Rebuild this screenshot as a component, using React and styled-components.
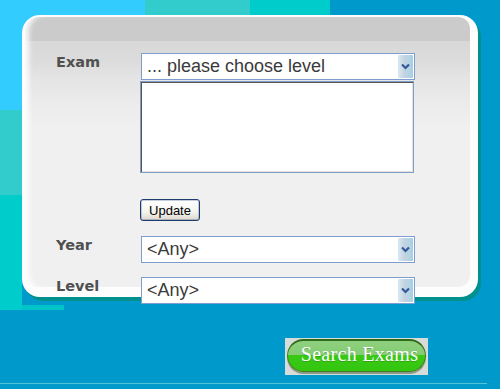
import React from "react";
import styled, { createGlobalStyle } from "styled-components";

const GlobalStyle = createGlobalStyle`
  html, body {
    margin: 0;
    padding: 0;
    overflow: hidden;
  }
`;

function Chevron() {
  return (
    <svg width="9" height="7" viewBox="0 0 9 7">
      <path d="M1 1.5 L4.5 5 L8 1.5" fill="none" stroke="#34589a" strokeWidth="2.2" />
    </svg>
  );
}

function Dropdown({ value }) {
  return (
    <SelectBox>
      <SelectValue>{value}</SelectValue>
      <ArrowButton>
        <Chevron />
      </ArrowButton>
    </SelectBox>
  );
}

export default function App() {
  return (
    <Page>
      <GlobalStyle />
      <Panel>
        <PanelInner>
          <FormGrid>
            <Label>Exam</Label>
            <FieldStack>
              <Dropdown value="... please choose level" />
              <ListBox />
              <UpdateButton type="button">Update</UpdateButton>
            </FieldStack>

            <Label>Year</Label>
            <Dropdown value="<Any>" />

            <Label>Level</Label>
            <Dropdown value="<Any>" />
          </FormGrid>
        </PanelInner>
      </Panel>

      <ButtonRow>
        <SearchFrame>
          <SearchPill type="button">Search Exams</SearchPill>
        </SearchFrame>
      </ButtonRow>

      <Divider />
    </Page>
  );
}

const Page = styled.div`
  width: 500px;
  height: 389px;
  overflow: hidden;
  display: flex;
  flex-direction: column;
  background-color: #0099cc;
  background-image:
    linear-gradient(#33ccff, #33ccff),
    linear-gradient(#33cccc, #33cccc),
    linear-gradient(#00cccc, #00cccc),
    linear-gradient(#33cccc, #33cccc),
    linear-gradient(#00cccc, #00cccc),
    linear-gradient(#00c4c8, #00c4c8);
  background-repeat: no-repeat;
  background-position:
    0 0,
    145px 0,
    250px 0,
    0 110px,
    0 195px,
    0 305px;
  background-size:
    145px 110px,
    105px 20px,
    80px 20px,
    22px 85px,
    22px 115px,
    64px 5px;
`;

const Panel = styled.div`
  margin: 15px 0 0 22px;
  width: 456px;
  height: 282px;
  flex-shrink: 0;
  box-sizing: border-box;
  border-radius: 18px;
  background: #fdfdfd;
  box-shadow: 3px 4px 0 #00908e;
  padding: 2px 8px 10px 3px;
`;

const PanelInner = styled.div`
  height: 100%;
  box-sizing: border-box;
  border-radius: 15px 12px 12px 14px;
  padding: 36px 0 0 31px;
  background: linear-gradient(
    to bottom,
    #cbcbcb 0,
    #cbcbcb 24px,
    #d8d8d8 24px,
    #dcdcdc 45px,
    #e4e4e4 60px,
    #ebebeb 85px,
    #f0f0f0 112px,
    #f0f0f0 100%
  );
  box-shadow: inset 7px 0 5px -3px rgba(255, 255, 255, 0.85);
`;

const FormGrid = styled.div`
  display: grid;
  grid-template-columns: 85px 274px;
  align-items: start;
  row-gap: 14px;
`;

const Label = styled.div`
  font-family: "DejaVu Sans", Verdana, sans-serif;
  font-weight: bold;
  font-size: 14.5px;
  line-height: 17px;
  padding-top: 1px;
  color: #505050;
`;

const FieldStack = styled.div`
  display: flex;
  flex-direction: column;
  align-items: flex-start;
`;

const SelectBox = styled.div`
  width: 274px;
  height: 27px;
  box-sizing: border-box;
  border: 1px solid #7f9ed0;
  background: #ffffff;
  display: flex;
  align-items: center;
  padding: 1px 1px 1px 5px;
`;

const SelectValue = styled.span`
  flex: 1;
  font-family: "Liberation Sans", Arial, sans-serif;
  font-size: 18px;
  color: #3a3a3a;
  white-space: nowrap;
  overflow: hidden;
`;

const ArrowButton = styled.span`
  width: 15px;
  height: 23px;
  display: flex;
  align-items: center;
  justify-content: center;
  background: linear-gradient(to right, #d8e8f6, #c4d2de 45%, #b2d4e6 75%, #a7cde0);
  border-radius: 1px;
`;

const ListBox = styled.div`
  margin: 1px 0 0 -1px;
  width: 274px;
  height: 92px;
  box-sizing: border-box;
  background: #ffffff;
  border: 1px solid #7f9ed0;
  box-shadow:
    inset 1px 1px 0 #555555,
    inset -1px -1px 0 #e2e2d6;
`;

const UpdateButton = styled.button`
  margin: 26px 0 1px -1px;
  width: 60px;
  height: 22px;
  padding: 0;
  border: 1px solid #1d3d70;
  border-radius: 3px;
  background: linear-gradient(#ffffff, #f4f4ef 60%, #ddd8cc);
  box-shadow: inset 0 0 0 1px rgba(29, 61, 112, 0.25);
  font-family: "Liberation Sans", Arial, sans-serif;
  font-size: 13px;
  color: #000000;
  cursor: pointer;
`;

const ButtonRow = styled.div`
  display: flex;
  padding-left: 285px;
  margin-top: 41px;
`;

const SearchFrame = styled.div`
  width: 143px;
  height: 37px;
  box-sizing: border-box;
  background: #d8dcd8;
  padding: 1px 2px 3px 2px;
  display: flex;
`;

const SearchPill = styled.button`
  flex: 1;
  padding: 0 0 3px 6px;
  border: 1px solid #3f7a22;
  border-top: 2px solid #2f6a18;
  border-radius: 17px;
  background: linear-gradient(#8fd07f 0, #84cc74 46%, #38c914 47%, #33c60f 100%);
  box-shadow: 0 2px 0 #8d9a8a;
  font-family: "Liberation Serif", "Times New Roman", serif;
  font-size: 20px;
  letter-spacing: 0.3px;
  color: #ffffff;
  text-shadow: 0 1px 0 rgba(40, 90, 20, 0.35);
  cursor: pointer;
`;

const Divider = styled.div`
  margin-top: 8px;
  width: 487px;
  height: 1px;
  background: #52c4d4;
`;
